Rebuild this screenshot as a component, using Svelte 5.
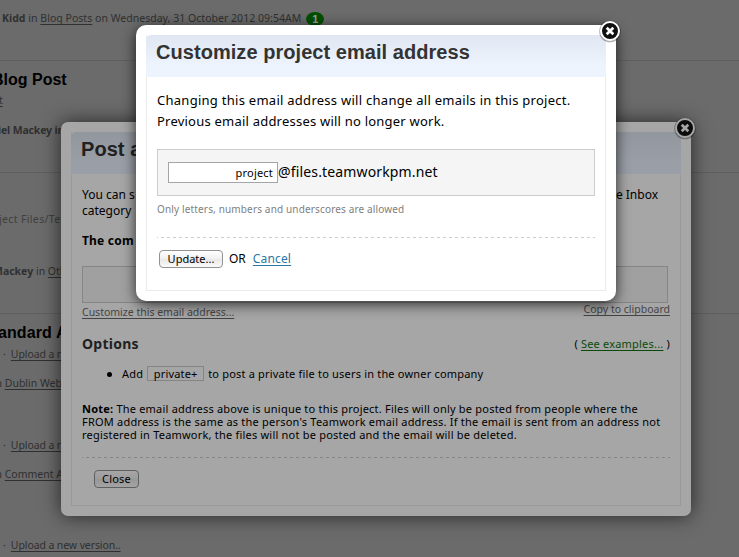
<script>
  const letters = 'Only letters, numbers and underscores are allowed';
  let address = $state('project');
</script>

{#snippet closeIcon()}
  <svg class="close" width="24" height="24" viewBox="0 0 24 24" aria-hidden="true">
    <circle class="halo" cx="12" cy="12.5" r="10.8" />
    <circle class="ring" cx="12" cy="12" r="9" />
    <path class="cross" d="M8.7 8.7l6.6 6.6M15.3 8.7l-6.6 6.6" />
  </svg>
{/snippet}

<div class="screen">
  <div class="page">
    <section class="s1">
      <p class="meta wide"><b>Kidd</b> in <u>Blog Posts</u> on Wednesday, 31 October 2012 09:54AM</p>
      <span class="badge">1</span>
    </section>
    <section class="s2">
      <h2>Blog Post</h2>
      <p class="meta tiny"><u>t</u></p>
      <p class="meta author"><b>iel Mackey in</b></p>
    </section>
    <section class="s3">
      <p class="meta path">ject Files/Te</p>
      <p class="meta other"><b>Mackey</b> in <u>Oth</u></p>
    </section>
    <section class="s4">
      <h2>andard A</h2>
      <p class="meta l1">· <u>Upload a n</u></p>
      <p class="meta l2">n <u>Dublin Web</u></p>
      <p class="meta l3">· <u>Upload a n</u></p>
      <p class="meta l4">n <u>Comment A</u></p>
      <p class="meta l5">· <u>Upload a new version..</u></p>
    </section>
  </div>

  <div class="dialog back">
    {@render closeIcon()}
    <div class="frame">
      <h1>Post a</h1>
      <div class="body">
        <div class="intro">
          <p>You can s</p>
          <p class="end">e Inbox</p>
        </div>
        <p class="intro2">category</p>
        <p class="lead">The com</p>
        <div class="well"></div>
        <div class="tools">
          <u class="customize">Customize this email address...</u>
          <u class="copy">Copy to clipboard</u>
        </div>
        <div class="options">
          <h3>Options</h3>
          <span class="examples">( <u>See examples...</u> )</span>
        </div>
        <div class="bullet"><i></i><span>Add</span><code>private+</code><span class="desc">to post a private file to users in the owner company</span></div>
        <div class="note">
          <p><b>Note:</b> The email address above is unique to this project. Files will only be posted from people where the</p>
          <p>FROM address is the same as the person's Teamwork email address. If the email is sent from an address not</p>
          <p>registered in Teamwork, the files will not be posted and the email will be deleted.</p>
        </div>
        <div class="rule"></div>
        <button>Close</button>
      </div>
    </div>
  </div>

  <div class="dialog front">
    {@render closeIcon()}
    <div class="frame">
      <h1>Customize project email address</h1>
      <div class="body">
        <p class="c1">Changing this email address will change all emails in this project.</p>
        <p class="c2">Previous email addresses will no longer work.</p>
        <div class="field">
          <input bind:value={address} aria-label="Address" /><span>@files.teamworkpm.net</span>
        </div>
        <p class="hint">{letters}</p>
        <div class="rule"></div>
        <div class="actions"><button>Update...</button><span>OR</span><u>Cancel</u></div>
      </div>
    </div>
  </div>
</div>

<style>
  :global(body) { margin: 0; background: #6b6b6b; }
  .screen {
    position: relative; width: 739px; height: 557px; overflow: hidden;
    background: #6b6b6b; font-family: "Noto Sans", "Open Sans", sans-serif; color: #000;
  }
  .screen * { box-sizing: border-box; }
  p, h1, h2, h3 { margin: 0; white-space: nowrap; }
  u { text-underline-offset: 2px; text-decoration-thickness: 1px; text-decoration-skip-ink: none; }

  .page { display: flex; flex-direction: column; }
  section { border-bottom: 1px solid #5f5f5f; overflow: hidden; }
  .s1 { height: 61px; display: flex; align-items: flex-start; padding: 10px 0 0 2px; }
  .s2 { height: 112px; padding-top: 9px; }
  .s3 { height: 141px; padding-top: 38px; }
  .s4 { height: 243px; padding-top: 9px; border: 0; }
  .meta { font-size: 10.5px; line-height: 16px; color: #303030; }
  .wide { letter-spacing: .03px; }
  .badge {
    width: 18px; height: 14px; margin: 2px 0 0 5px; border-radius: 50%; background: #005000;
    color: #a0a0a0; font: bold 11px/14px "Liberation Sans", sans-serif; text-align: center;
  }
  h2 { font: bold 16px/20px "Liberation Sans", sans-serif; }
  .s2 h2 { margin-left: -8px; }
  .tiny { margin-top: 2px; margin-left: -1px; }
  .author { margin-top: 14px; margin-left: -2px; letter-spacing: -.15px; }
  .path { color: #404040; margin-left: -1px; letter-spacing: .35px; }
  .other { margin-top: 36px; margin-left: -7px; }
  .s4 h2 { margin-left: -2px; letter-spacing: .1px; }
  .l1, .l3, .l5 { margin-left: 3px; letter-spacing: -.1px; }
  .l1 u, .l3 u, .l5 u { margin-left: 2.5px; }
  .l2, .l4 { margin-left: -4.5px; }
  .l1 { margin-top: 3px; }
  .l2 { margin-top: 13px; }
  .l3 { margin-top: 46px; }
  .l4 { margin-top: 13px; }
  .l5 { margin-top: 55px; }

  .dialog { position: absolute; padding: 10px; }
  .back {
    left: 61px; top: 122px; width: 630px; height: 394px; border-radius: 7px;
    background: #a6a6a6; box-shadow: 0 0 20px rgba(0, 0, 0, .65);
  }
  .front {
    left: 136px; top: 25px; width: 480px; height: 276px; border-radius: 10px;
    background: #fff; box-shadow: 0 3px 14px rgba(0, 0, 0, .75);
  }
  .close { position: absolute; right: -6px; top: -6px; }
  .back .close { top: -6.5px; }
  .halo { fill: rgba(0, 0, 0, .3); }
  .ring { fill: #111; stroke: #fff; stroke-width: 2; }
  .cross { fill: none; stroke: #fff; stroke-width: 2.7; }
  .back .ring { fill: #0c0c0c; stroke: #a6a6a6; }
  .back .cross { stroke: #a6a6a6; }
  .frame { height: 100%; border: 1px solid #ebebeb; border-top: 0; }
  .back .frame { border-color: #999; }
  h1 {
    height: 42px; margin: 0 -1px; padding-left: 10px; border-radius: 5px 5px 0 0;
    font: bold 20px/35px "Liberation Sans", sans-serif; color: #333; letter-spacing: .05px;
    background: linear-gradient(#e0e7f2, #edf4fe 75%);
  }
  .back h1 { color: #212121; background: linear-gradient(#92969d, #9a9fa7 75%); }
  .body { padding: 0 10px; }
  .rule {
    height: 1px;
    background: repeating-linear-gradient(90deg, #ccc 0 1px, transparent 1px 4px, #ccc 4px 6px);
  }
  .back .rule { margin-top: 16px; background: repeating-linear-gradient(90deg, #858585 0 1px, transparent 1px 4px, #858585 4px 6px); }
  button {
    font: 11px/15px "Noto Sans", sans-serif; color: #000; height: 18px; padding: 0 0 1px;
    border: 1px solid #929292; border-radius: 4px; display: block;
    background: linear-gradient(#fff, #f0f0f0 50%, #e8e8e8 51%, #fafafa);
  }
  .back button {
    width: 45px; margin: 12px 0 0 12px; border-color: #5f5f5f; letter-spacing: .2px;
    background: linear-gradient(#a6a6a6, #9c9c9c 50%, #979797 51%, #a3a3a3);
  }

  .intro { display: flex; justify-content: space-between; padding: 13px 12px 0 0; font-size: 12px; line-height: 16px; }
  .intro2 { font-size: 12px; line-height: 15px; }
  .lead { margin-top: 14px; font-size: 12px; line-height: 18px; font-weight: bold; letter-spacing: .2px; }
  .well { height: 37px; width: 586px; margin-top: 16px; border: 1px solid #858585; background: #a0a0a0; }
  .tools { display: flex; justify-content: space-between; font-size: 10.5px; line-height: 15px; height: 15px; color: #444; }
  .customize { margin-top: 2px; }
  .copy { margin-top: -1px; }
  .options { display: flex; justify-content: space-between; align-items: center; margin-top: 16px; height: 20px; }
  h3 { font-size: 14px; line-height: 20px; color: #212121; letter-spacing: .25px; }
  .examples { font-size: 11px; line-height: 20px; letter-spacing: .2px; }
  .examples u { color: #0a4b0a; }
  .bullet { display: flex; align-items: center; height: 16px; margin-top: 11px; padding-left: 25px; font-size: 11px; white-space: nowrap; letter-spacing: .19px; }
  .bullet i { width: 5px; height: 5px; border-radius: 50%; background: #000; margin: 2px 10px 0 0; }
  code { font: inherit; width: 57px; height: 15px; line-height: 13px; text-align: center; border: 1px solid #858585; margin: 0 4px 0 4px; }
  .note { margin-top: 21px; font-size: 11px; line-height: 13px; letter-spacing: .21px; }

  .c1, .c2 { font-size: 13px; line-height: 21px; letter-spacing: .27px; }
  .c2 { letter-spacing: .22px; }
  .c1 { margin-top: 13px; }
  .field { height: 47px; margin-top: 17px; border: 1px solid #ccc; background: #f5f5f5; display: flex; align-items: center; padding-left: 10px; font-size: 14px; letter-spacing: .15px; }
  .field span { padding-bottom: 2px; }
  input { width: 110px; height: 21px; border: 1px solid #a5a5a5; background: #fff; text-align: right; padding: 1px 4px 1px; font: 11px "Noto Sans", sans-serif; letter-spacing: .2px; color: #000; }
  .hint { margin-top: 5px; font-size: 10px; line-height: 16px; color: #808080; letter-spacing: .15px; }
  .front .rule { margin-top: 20px; }
  .actions { display: flex; align-items: center; margin-top: 12px; font-size: 12px; line-height: 18px; }
  .front button { width: 64px; margin: 0 6px 0 2px; }
  .actions u { color: #2a77a5; margin-left: 7px; letter-spacing: .15px; }
</style>
